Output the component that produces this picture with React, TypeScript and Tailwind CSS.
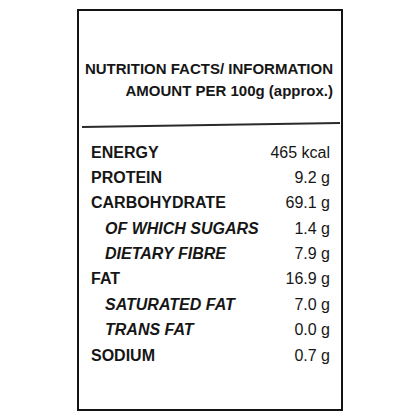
const rows: {label: string; value: string; sub?: boolean}[] = [
  {label: 'ENERGY', value: '465 kcal'},
  {label: 'PROTEIN', value: '9.2 g'},
  {label: 'CARBOHYDRATE', value: '69.1 g'},
  {label: 'OF WHICH SUGARS', value: '1.4 g', sub: true},
  {label: 'DIETARY FIBRE', value: '7.9 g', sub: true},
  {label: 'FAT', value: '16.9 g'},
  {label: 'SATURATED FAT', value: '7.0 g', sub: true},
  {label: 'TRANS FAT', value: '0.0 g', sub: true},
  {label: 'SODIUM', value: '0.7 g'},
];

export default function App() {
  return (
    <div className="w-[420px] h-[420px] bg-white font-['Liberation_Sans',Arial,sans-serif] text-[#161616]">
      <div className="pt-[9px] pl-[77px]">
        <div className="w-[266px] h-[402px] border-2 border-[#141414] flex flex-col">
          <div className="pt-[47px] pr-[8px] flex flex-col items-end text-[15px] leading-[22px] font-bold">
            <span>NUTRITION FACTS/ INFORMATION</span>
            <span>AMOUNT PER 100g (approx.)</span>
          </div>
          <div className="mt-[22px] ml-[3px] mr-[1px] h-[1.5px] bg-[#2a2a2a] -rotate-[0.9deg]" />
          <ul className="mt-[14px] pl-[12px] pr-[11px] flex flex-col">
            {rows.map((r) => (
              <li key={r.label} className="flex justify-between items-center h-[25.4px] text-[16px] leading-[25.4px]">
                <span className={r.sub ? 'pl-[14px] font-bold italic' : 'font-bold'}>{r.label}</span>
                <span>{r.value}</span>
              </li>
            ))}
          </ul>
        </div>
      </div>
    </div>
  );
}
